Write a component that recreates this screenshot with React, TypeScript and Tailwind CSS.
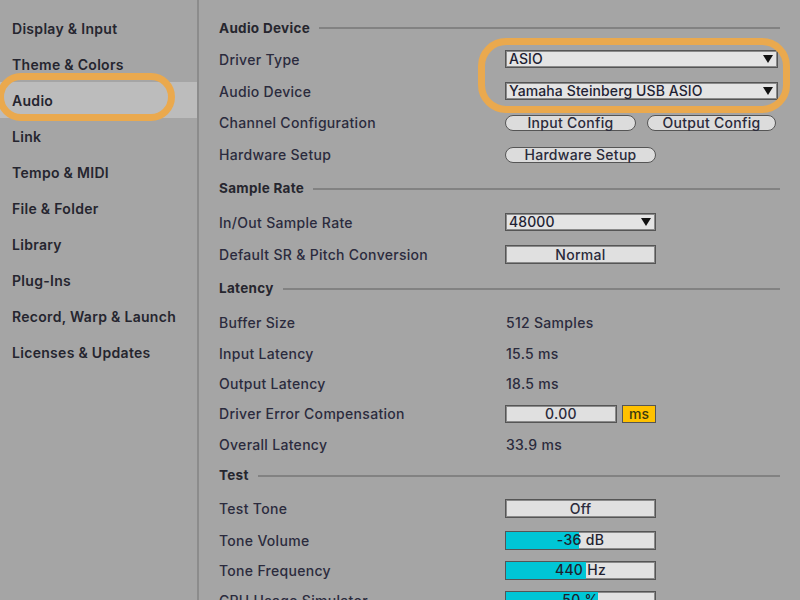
import React from "react";

const font = { fontFamily: "Inter, 'Open Sans', sans-serif" };

function Tri() {
  return (
    <svg width="10" height="8" viewBox="0 0 10 8" className="shrink-0">
      <polygon points="0,0 10,0 5,8" fill="#111" />
    </svg>
  );
}

function Dropdown({ text, w }: { text: string; w: string }) {
  return (
    <div className={`${w} h-[18px] bg-[#e4e4e4] border border-[#555] shadow-[inset_0_0_0_1px_#8a8a8a] flex items-center justify-between pl-[3px] pr-[4px]`}>
      <span className="text-[14px] font-medium tracking-[0.1px] text-[#1f1f33] leading-none">{text}</span>
      <Tri />
    </div>
  );
}

function Pill({ text, w }: { text: string; w: string }) {
  return (
    <div className={`${w} h-[16px] bg-[#dcdcdc] border-[1.5px] border-[#555] rounded-full flex items-center justify-center`}>
      <span className="text-[14px] font-medium tracking-[0.3px] text-[#2a2a3a] leading-none">{text}</span>
    </div>
  );
}

function Box({ text }: { text: string }) {
  return (
    <div className="w-[151px] h-[19px] bg-[#e0e0e0] border border-[#555] shadow-[inset_0_0_0_1px_#8a8a8a] flex items-center justify-center">
      <span className="text-[14px] font-medium tracking-[0.3px] text-[#2a2a3a] leading-none">{text}</span>
    </div>
  );
}

function Bar({ value, unit, pct }: { value: string; unit: string; pct: number }) {
  return (
    <div className="relative w-[151px] h-[19px] bg-[#e2e2e2] border border-[#555] shadow-[inset_0_0_0_1px_#8a8a8a] overflow-hidden">
      <div className="absolute left-0 top-0 bottom-0 bg-[#00c6d6]" style={{ width: `${pct}%` }} />
      <div className="absolute inset-0 flex items-center justify-center">
        <span className="text-[14px] font-medium tracking-[0.3px] text-[#1f1f2f] leading-none">
          {value} {unit}
        </span>
      </div>
    </div>
  );
}

function Header({ text, h }: { text: string; h: string }) {
  return (
    <div className={`${h} shrink-0 flex items-center`}>
      <span className="text-[13.5px] font-bold tracking-[0.3px] text-[#26262e]">{text}</span>
      <div className="flex-1 h-[2px] bg-[#828282] ml-[9px]" />
    </div>
  );
}

function Row({ label, h, children }: { label: string; h: string; children?: React.ReactNode }) {
  return (
    <div className={`${h} shrink-0 flex items-center`}>
      <div className="w-[286px] shrink-0 text-[14px] font-medium tracking-[0.3px] text-[#2b2b3d]">{label}</div>
      <div className="flex items-center">{children}</div>
    </div>
  );
}

function Val({ text }: { text: string }) {
  return <span className="pl-[1px] text-[14px] font-medium tracking-[0.3px] text-[#2b2b3d]">{text}</span>;
}

const sidebarItems = [
  "Display & Input",
  "Theme & Colors",
  "Audio",
  "Link",
  "Tempo & MIDI",
  "File & Folder",
  "Library",
  "Plug-Ins",
  "Record, Warp & Launch",
  "Licenses & Updates",
];

export default function App() {
  return (
    <div className="relative w-[800px] h-[600px] overflow-hidden bg-[#a5a5a5] flex" style={font}>
      <div className="w-[199px] shrink-0 border-r-2 border-[#8c8c8c] pt-[10px]">
        {sidebarItems.map((it) => (
          <div
            key={it}
            className={`h-[36px] flex items-center pl-[12px] text-[14px] font-semibold tracking-[0.3px] text-[#25252f] ${
              it === "Audio" ? "bg-[#bcbcbc]" : ""
            }`}
          >
            {it}
          </div>
        ))}
      </div>

      <div className="flex-1 pl-[20px] pr-[20px] pt-[13px] flex flex-col">
        <Header text="Audio Device" h="h-[30px]" />
        <Row label="Driver Type" h="h-[32px]">
          <Dropdown text="ASIO" w="w-[273px]" />
        </Row>
        <Row label="Audio Device" h="h-[32px]">
          <Dropdown text="Yamaha Steinberg USB ASIO" w="w-[273px]" />
        </Row>
        <Row label="Channel Configuration" h="h-[31px]">
          <div className="flex gap-[11px]">
            <Pill text="Input Config" w="w-[131px]" />
            <Pill text="Output Config" w="w-[129px]" />
          </div>
        </Row>
        <Row label="Hardware Setup" h="h-[33px]">
          <Pill text="Hardware Setup" w="w-[151px]" />
        </Row>

        <Header text="Sample Rate" h="h-[35px]" />
        <Row label="In/Out Sample Rate" h="h-[32px]">
          <Dropdown text="48000" w="w-[151px]" />
        </Row>
        <Row label="Default SR & Pitch Conversion" h="h-[33px]">
          <Box text="Normal" />
        </Row>

        <Header text="Latency" h="h-[35px]" />
        <Row label="Buffer Size" h="h-[32px]">
          <Val text="512 Samples" />
        </Row>
        <Row label="Input Latency" h="h-[30px]">
          <Val text="15.5 ms" />
        </Row>
        <Row label="Output Latency" h="h-[30px]">
          <Val text="18.5 ms" />
        </Row>
        <Row label="Driver Error Compensation" h="h-[31px]">
          <div className="flex gap-[5px]">
            <div className="w-[112px] h-[18px] bg-[#e0e0e0] border border-[#555] shadow-[inset_0_0_0_1px_#8a8a8a] flex items-center justify-center">
              <span className="text-[14px] font-medium tracking-[0.3px] text-[#2a2a3a] leading-none">0.00</span>
            </div>
            <div className="w-[34px] h-[18px] bg-[#ffc100] border border-[#555] flex items-center justify-center">
              <span className="text-[14px] font-medium text-[#3a3a10] leading-none">ms</span>
            </div>
          </div>
        </Row>
        <Row label="Overall Latency" h="h-[30px]">
          <Val text="33.9 ms" />
        </Row>

        <Header text="Test" h="h-[33px]" />
        <Row label="Test Tone" h="h-[33px]">
          <Box text="Off" />
        </Row>
        <Row label="Tone Volume" h="h-[30px]">
          <Bar value="-36" unit="dB" pct={49} />
        </Row>
        <Row label="Tone Frequency" h="h-[30px]">
          <Bar value="440" unit="Hz" pct={54} />
        </Row>
        <Row label="CPU Usage Simulator" h="h-[30px]">
          <Bar value="50" unit="%" pct={62} />
        </Row>
      </div>

      {/* Orange highlight rings */}
      <div className="absolute left-[-3px] top-[73px] w-[178px] h-[48px] rounded-full border-[7px] border-[#eaa94e] pointer-events-none" />
      <div className="absolute left-[478px] top-[38px] w-[312px] h-[75px] rounded-[28px] border-[7px] border-[#eaa94e] pointer-events-none" />
    </div>
  );
}
